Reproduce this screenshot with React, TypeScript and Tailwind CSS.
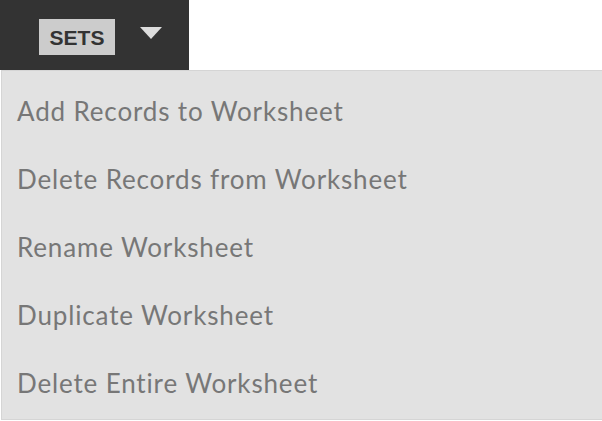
export default function App() {
  const items = [
    "Add Records to Worksheet",
    "Delete Records from Worksheet",
    "Rename Worksheet",
    "Duplicate Worksheet",
    "Delete Entire Worksheet",
  ]

  return (
    <div className="w-[602px] h-[421px] bg-white font-['Lato','Open_Sans',sans-serif]">
      {/* toolbar */}
      <div className="w-[189px] h-[70px] bg-[#333333] flex items-center pl-[39px] gap-[25px] pt-[4px]">
        <button className="w-[76px] h-[36px] bg-[#cccccc] text-[#333333] font-['Liberation_Sans',sans-serif] font-bold text-[21px] leading-none flex items-center justify-center">
          SETS
        </button>
        <svg width="22" height="12" viewBox="0 0 22 12" className="mb-[8px]">
          <polygon points="0,0 22,0 11,12" fill="#dddddd" />
        </svg>
      </div>

      {/* dropdown menu */}
      <div className="ml-px w-[601px] h-[350px] bg-[#e2e2e2] border border-r-0 border-[#d5d5d5] pt-[6px]">
        {items.map((label) => (
          <div
            key={label}
            className="h-[68px] flex items-center pl-[15px] text-[26px] tracking-[0.85px] text-[#777777]"
          >
            {label}
          </div>
        ))}
      </div>
    </div>
  )
}
